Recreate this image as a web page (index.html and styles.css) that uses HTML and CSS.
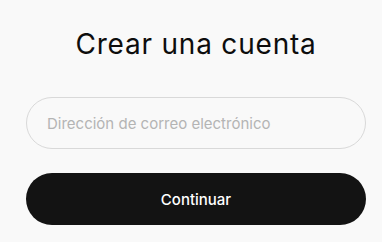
FILE: index.html
```html
<!DOCTYPE html>
<html lang="es">
<head>
<meta charset="utf-8">
<link rel="stylesheet" href="styles.css">
</head>
<body>
<main class="auth">
  <h1 class="title">Crear una cuenta</h1>
  <form class="form">
    <input class="field" type="email" placeholder="Dirección de correo electrónico">
    <button class="btn" type="button">Continuar</button>
  </form>
</main>
</body>
</html>
```
FILE: styles.css
```css
html, body {
  margin: 0;
  padding: 0;
  background: #f9f9f9;
}
body {
  font-family: Inter, "Noto Sans", sans-serif;
  color: #0d0d0d;
}
.auth {
  padding: 26px 16px 0 26px;
  display: flex;
  flex-direction: column;
}
.title {
  margin: 0;
  font-size: 28px;
  font-weight: 400;
  line-height: 36px;
  text-align: center;
  letter-spacing: 0.8px;
}
.form {
  margin-top: 35px;
  display: flex;
  flex-direction: column;
  gap: 24px;
}
.field {
  box-sizing: border-box;
  height: 52px;
  width: 100%;
  border: 1px solid #d9d9d9;
  border-radius: 26px;
  background: transparent;
  padding: 0 20px;
  font-family: inherit;
  font-size: 15px;
  color: #0d0d0d;
  outline: none;
}
.field::placeholder {
  color: #b4b4b4;
}
.btn {
  box-sizing: border-box;
  height: 52px;
  width: 100%;
  border: 0;
  border-radius: 26px;
  background: #131313;
  color: #fff;
  font-family: inherit;
  font-size: 15px;
  font-weight: 500;
}
```
